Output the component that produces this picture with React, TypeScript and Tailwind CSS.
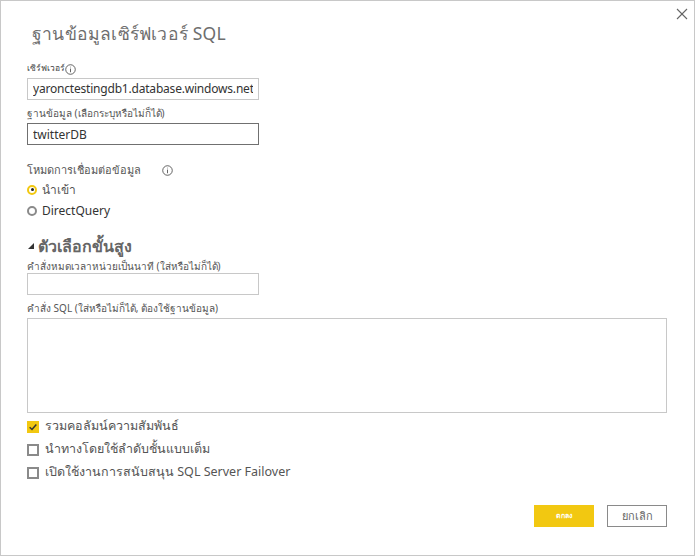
import { useState } from "react"

const font = { fontFamily: '"Noto Sans", "Open Sans", sans-serif' }

function InfoIcon({ className = "" }: { className?: string }) {
  return (
    <svg viewBox="0 0 12 12" className={className} fill="none" stroke="#444" strokeWidth="0.9">
      <circle cx="6" cy="6" r="5.2" />
      <line x1="6" y1="5" x2="6" y2="9" />
      <circle cx="6" cy="3.3" r="0.5" fill="#444" stroke="none" />
    </svg>
  )
}

function Check({ checked, label }: { checked?: boolean; label: string }) {
  return (
    <div className="flex items-center h-[23px]">
      {checked ? (
        <span className="w-[12px] h-[12px] bg-[#f2c811] flex items-center justify-center">
          <svg viewBox="0 0 12 12" className="w-[10px] h-[10px]" fill="none" stroke="#333" strokeWidth="1.8">
            <path d="M2 6.2 L4.8 9 L10 3" />
          </svg>
        </span>
      ) : (
        <span className="w-[12px] h-[12px] border-2 border-[#8a8a8a] bg-white" />
      )}
      <span className="ml-[6px] text-[12.5px] text-[#555]">{label}</span>
    </div>
  )
}

export default function App() {
  const [mode, setMode] = useState("import")

  return (
    <div className="w-[696px] h-[557px] bg-white" style={font}>
      <div className="relative w-[695px] h-[556px] border border-[#c8c8c8] bg-white">
        <button className="absolute left-[675px] top-[7px] w-[12px] h-[12px]">
          <svg viewBox="0 0 12 12" className="w-[12px] h-[12px]" stroke="#666" strokeWidth="1.1">
            <line x1="1" y1="1" x2="11" y2="11" />
            <line x1="11" y1="1" x2="1" y2="11" />
          </svg>
        </button>

        <div className="pl-[26px] pt-[17px]">
          <h1 className="pl-[5px] text-[17.5px] leading-[30px] text-[#6e6e6e] tracking-[0.2px]">ฐานข้อมูลเซิร์ฟเวอร์ SQL</h1>

          <div className="mt-[13px] flex items-center h-[14px]">
            <span className="text-[8.5px] text-[#444]">เซิร์ฟเวอร์</span>
            <InfoIcon className="w-[11px] h-[11px] mt-[3px]" />
          </div>
          <input
            className="mt-[2px] w-[232px] h-[22px] border border-[#c8c8c8] px-[5px] text-[12px] tracking-[-0.2px] text-[#333] outline-none"
            defaultValue="yaronctestingdb1.database.windows.net"
          />
          <div className="mt-[5px] text-[10px] leading-[16px] text-[#555]">ฐานข้อมูล (เลือกระบุหรือไม่ก็ได้)</div>
          <input
            className="mt-[2px] w-[232px] h-[22px] border border-[#707070] px-[5px] text-[12px] text-[#333] outline-none"
            defaultValue="twitterDB"
          />

          <div className="mt-[18px] flex items-center h-[14px]">
            <span className="text-[11px] text-[#555]">โหมดการเชื่อมต่อข้อมูล</span>
            <InfoIcon className="w-[11px] h-[11px] ml-[21px]" />
          </div>
          <div className="mt-[2px] flex flex-col">
            {[
              { id: "import", label: "นำเข้า" },
              { id: "direct", label: "DirectQuery" },
            ].map((o) => (
              <label key={o.id} className="flex items-center h-[21px] cursor-pointer" onClick={() => setMode(o.id)}>
                <span
                  className={
                    mode === o.id
                      ? "w-[10px] h-[10px] rounded-full border-2 border-[#f2c811] flex items-center justify-center"
                      : "w-[10px] h-[10px] rounded-full border-2 border-[#8a8a8a]"
                  }
                >
                  {mode === o.id && <span className="w-[3px] h-[3px] rounded-full bg-[#222]" />}
                </span>
                <span className={o.id === "direct" ? "ml-[5px] text-[12px] text-[#333]" : "ml-[5px] text-[12px] text-[#555]"}>{o.label}</span>
              </label>
            ))}
          </div>

          <div className="mt-[17px] flex items-end h-[16px]">
            <svg viewBox="0 0 6 6" className="w-[6px] h-[6px] mb-[5px] ml-[1px]">
              <path d="M6 0 L6 6 L0 6 Z" fill="#333" />
            </svg>
            <span className="ml-[4px] text-[16px] font-bold leading-[16px] text-[#666]">ตัวเลือกขั้นสูง</span>
          </div>
          <div className="mt-[5px] text-[10px] leading-[14px] text-[#555]">คำสั่งหมดเวลาหน่วยเป็นนาที (ใส่หรือไม่ก็ได้)</div>
          <input className="block w-[232px] h-[22px] border border-[#c8c8c8] px-[6px] text-[12px] outline-none" />
          <div className="mt-[5px] text-[10px] leading-[16px] text-[#555]">คำสั่ง SQL (ใส่หรือไม่ก็ได้, ต้องใช้ฐานข้อมูล)</div>
          <textarea className="mt-[2px] block w-[640px] h-[95px] border border-[#c8c8c8] resize-none outline-none" />

          <div className="mt-[2px] flex flex-col">
            <Check checked label="รวมคอลัมน์ความสัมพันธ์" />
            <Check label="นำทางโดยใช้ลำดับชั้นแบบเต็ม" />
            <Check label="เปิดใช้งานการสนับสนุน SQL Server Failover" />
          </div>
        </div>

        <div className="absolute left-[533px] top-[504px] flex gap-[13px]">
          <button className="w-[60px] h-[22px] bg-[#f2c811] text-[7px] font-bold text-white">ตกลง</button>
          <button className="w-[60px] h-[22px] border border-[#8a8a8a] text-[11px] text-[#666]">ยกเลิก</button>
        </div>
      </div>
    </div>
  )
}
